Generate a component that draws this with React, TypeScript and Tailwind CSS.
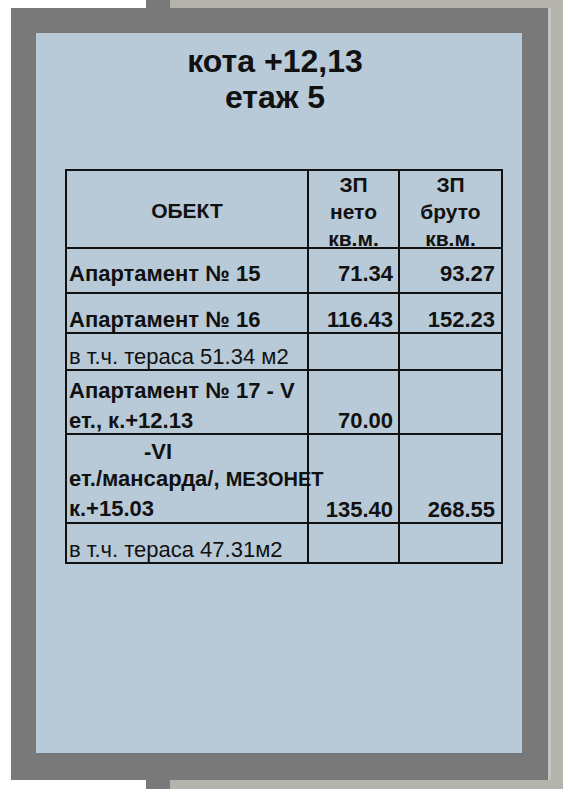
const FRAME = "bg-[#797979]";
const PALE = "bg-[#b4b4ad]";

type Row = {
  h: string;
  a: React.ReactNode;
  b?: string;
  c?: string;
  pad: string;
};

const rows: Row[] = [
  { h: "h-[45px]", a: <b>Апартамент № 15</b>, b: "71.34", c: "93.27", pad: "pb-[6px]" },
  { h: "h-[40px]", a: <b>Апартамент № 16</b>, b: "116.43", c: "152.23", pad: "pb-[0px]" },
  { h: "h-[37px]", a: <span>в т.ч. тераса 51.34 м2</span>, pad: "pb-[0px]" },
  {
    h: "h-[64px]",
    a: (
      <b className="block leading-[30px] -mb-[3px]">
        Апартамент № 17 - V
        <br />
        ет., к.+12.13
      </b>
    ),
    b: "70.00",
    pad: "pb-[0px]",
  },
  {
    h: "h-[89px]",
    a: (
      <b className="block leading-[29px] whitespace-nowrap -mb-[1px]">
        <span className="pl-[75px] relative top-[2px]">-VI</span>
        <br />
        ет./мансарда/, <span className="text-[20px]">МЕЗОНЕТ</span>
        <br />
        к.+15.03
      </b>
    ),
    b: "135.40",
    c: "268.55",
    pad: "pb-[0px]",
  },
  { h: "h-[40px]", a: <span>в т.ч. тераса 47.31м2</span>, pad: "pb-[0px]" },
];

function Cell({ className, children }: { className: string; children?: React.ReactNode }) {
  return <div className={`border-r-2 border-b-2 border-[#111] flex ${className}`}>{children}</div>;
}

export default function App() {
  return (
    <div className={`w-[563px] h-[789px] flex flex-col ${PALE} font-['Liberation_Sans',Arial,sans-serif] text-[#111]`}>
      {/* top strip */}
      <div className="h-[8px] flex">
        <div className="w-[146px] bg-white" />
        <div className={`w-[24px] ${FRAME}`} />
        <div className="flex-1" />
      </div>

      <div className="h-[772px] flex">
        <div className="w-[11px] bg-white" />
        <div className={`w-[537px] ${FRAME} pl-[25px] pr-[26px] pt-[25px] pb-[26px]`}>
          <div className="h-full bg-[#b8cad8] border-b border-[#6d7882] pt-[10px]">
            <div className="text-center font-bold text-[32px] leading-[36px] pr-[8px]">
              <div>кота +12,13</div>
              <div>етаж 5</div>
            </div>

            <div className="ml-[29px] mt-[54px] w-[438px] border-l-2 border-t-2 border-[#111] grid grid-cols-[242px_91px_103px] text-[22px] leading-[24px]">
              <Cell className="h-[78px] items-center justify-center font-bold text-[21px] pt-[4px]">ОБЕКТ</Cell>
              <Cell className="h-[78px] flex-col items-center justify-center font-bold text-[21px] leading-[27px] pt-[4px]">
                <span>ЗП</span>
                <span>нето</span>
                <span>кв.м.</span>
              </Cell>
              <Cell className="h-[78px] flex-col items-center justify-center font-bold text-[21px] leading-[27px] pt-[4px]">
                <span>ЗП</span>
                <span>бруто</span>
                <span>кв.м.</span>
              </Cell>

              {rows.map((r, i) => (
                <div key={i} className="contents">
                  <Cell className={`${r.h} items-end ${r.pad} pl-[2px]`}>{r.a}</Cell>
                  <Cell className={`${r.h} items-end ${r.pad} justify-end pr-[5px] font-bold`}>{r.b}</Cell>
                  <Cell className={`${r.h} items-end ${r.pad} justify-end pr-[6px] font-bold`}>{r.c}</Cell>
                </div>
              ))}
            </div>
          </div>
        </div>
        <div className="flex-1 border-l-[3px] border-[#c4c4be]" />
      </div>

      {/* bottom strip */}
      <div className="h-[9px] flex">
        <div className="w-[146px] bg-white" />
        <div className={`w-[24px] ${FRAME}`} />
        <div className="flex-1" />
      </div>
    </div>
  );
}
